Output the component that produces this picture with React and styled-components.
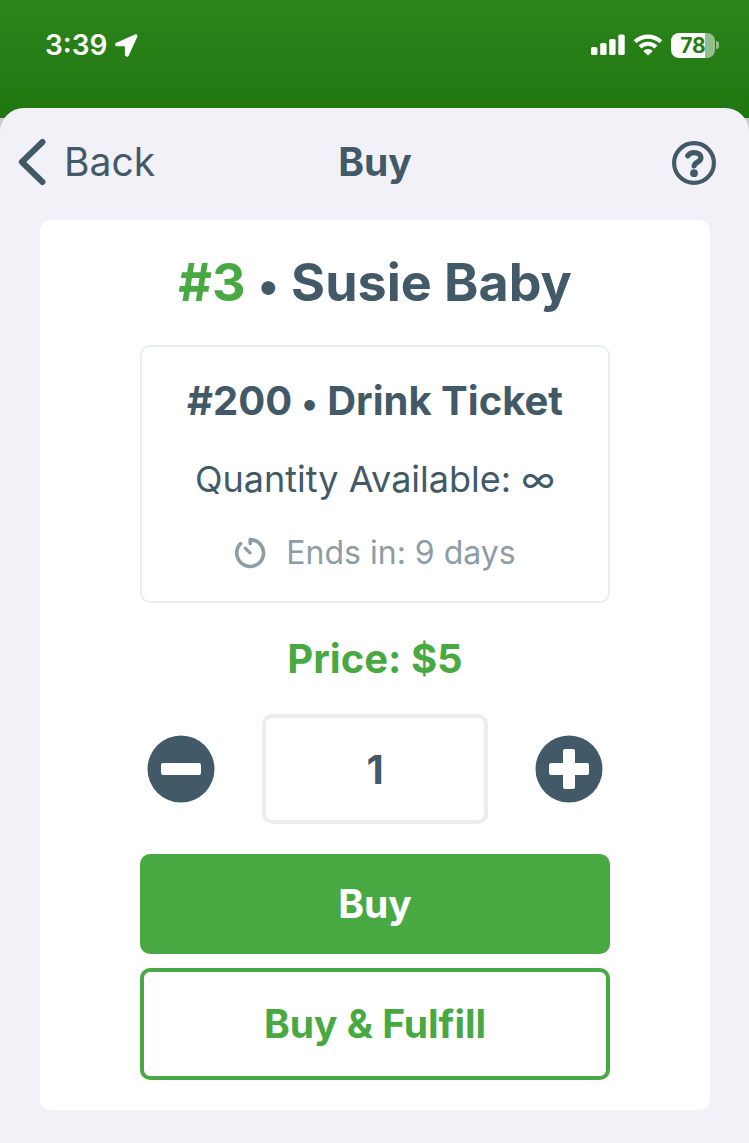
import React, { useState } from 'react';
import styled, { createGlobalStyle } from 'styled-components';

const App = () => {
  const [quantity, setQuantity] = useState('1');

  const step = (amount) => {
    setQuantity(String(Math.max(1, (parseInt(quantity, 10) || 0) + amount)));
  };

  return (
    <>
      <GlobalStyle />
      <Page>
        <StatusBar>
          <StatusGroup>
            <Time>3:39</Time>
            <LocationIcon />
          </StatusGroup>
          <StatusGroup>
            <SignalIcon />
            <WifiIcon />
            <Battery>
              <BatteryBody>78</BatteryBody>
              <BatteryTip />
            </Battery>
          </StatusGroup>
        </StatusBar>

        <Sheet>
          <NavBar>
            <BackButton type="button">
              <BackIcon />
              Back
            </BackButton>
            <NavTitle>Buy</NavTitle>
            <HelpButton type="button" aria-label="Help">
              <HelpIcon />
            </HelpButton>
          </NavBar>

          <Card>
            <Bidder>
              <Accent>#3</Accent> <Bullet>•</Bullet> Susie Baby
            </Bidder>
            <ItemBox>
              <ItemName>
                #200 <Bullet>•</Bullet> Drink Ticket
              </ItemName>
              <Available>Quantity Available: ∞</Available>
              <EndsIn>
                <TimerIcon />
                Ends in: 9 days
              </EndsIn>
            </ItemBox>
            <Price>Price: $5</Price>
            <Stepper>
              <RoundButton type="button" aria-label="Decrease quantity" onClick={() => step(-1)}>
                <MinusIcon />
              </RoundButton>
              <QuantityInput
                type="text"
                inputMode="numeric"
                aria-label="Quantity"
                value={quantity}
                onChange={(e) => setQuantity(e.target.value)}
              />
              <RoundButton type="button" aria-label="Increase quantity" onClick={() => step(1)}>
                <PlusIcon />
              </RoundButton>
            </Stepper>
            <Actions>
              <BuyButton type="button">Buy</BuyButton>
              <FulfillButton type="button">Buy &amp; Fulfill</FulfillButton>
            </Actions>
          </Card>
        </Sheet>
      </Page>
    </>
  );
};

const LocationIcon = () => (
  <svg width="23" height="23" viewBox="0 0 23 23" fill="#fff" aria-hidden="true">
    <path d="M20 0.4 L1.2 8.7 C-0.5 9.6 -0.1 12.2 1.7 12.3 H9 C9.6 12.3 9.9 12.6 9.9 13.2 V20.6 C10 23 13 23.3 13.8 21.4 L22.2 3 C23 1.1 21.7 -0.3 20 0.4 Z" />
  </svg>
);

const SignalIcon = () => (
  <svg width="34" height="22" viewBox="0 0 34 22" fill="#fff" aria-hidden="true">
    <rect x="0" y="13" width="6.4" height="8" rx="1.6" />
    <rect x="9.2" y="9" width="6.4" height="12" rx="1.6" />
    <rect x="18.2" y="5" width="6.4" height="16" rx="1.6" />
    <rect x="27.3" y="0.4" width="6.4" height="20.6" rx="1.6" />
  </svg>
);

const WifiIcon = () => (
  <svg width="30" height="22" viewBox="0 0 30 22" aria-hidden="true">
    <g fill="none" stroke="#fff" strokeWidth="4.2">
      <path d="M2.1 7.8 A18.6 18.6 0 0 1 27.9 7.8" />
      <path d="M7 13 A11.5 11.5 0 0 1 23 13" />
    </g>
    <path d="M15 21.6 L10.2 16.9 A6.8 6.8 0 0 1 19.8 16.9 Z" fill="#fff" />
  </svg>
);

const BackIcon = () => (
  <svg width="28" height="48" viewBox="0 0 28 48" aria-hidden="true">
    <path d="M24.5 4 L3.9 24 L24.5 44" fill="none" stroke="#425a68" strokeWidth="6" strokeLinecap="round" strokeLinejoin="round" />
  </svg>
);

const HelpIcon = () => (
  <svg width="44" height="44" viewBox="0 0 44 44" aria-hidden="true">
    <circle cx="22" cy="22" r="19.9" fill="none" stroke="#425a68" strokeWidth="4.2" />
    <path d="M15.8 14.8 C17.4 12.4 19.6 11.6 22 11.6 C25.8 11.6 28.9 13.4 28.9 17 C28.9 21.4 22.4 20.8 22.2 25" fill="none" stroke="#425a68" strokeWidth="5.2" strokeLinecap="round" />
    <circle cx="22" cy="32.2" r="3.9" fill="#425a68" />
  </svg>
);

const TimerIcon = () => (
  <svg width="32" height="32" viewBox="0 0 32 32" aria-hidden="true">
    <g fill="none" stroke="#8d9ca5" strokeWidth="3.6" strokeLinecap="round" strokeLinejoin="round">
      <path d="M16.2 6.6 V2.6 A13.4 13.4 0 1 1 6.6 6.6" />
      <path d="M11.2 11.2 L16 15.8" strokeWidth="3.2" />
    </g>
  </svg>
);

const MinusIcon = () => (
  <svg width="68" height="68" viewBox="0 0 68 68" aria-hidden="true">
    <circle cx="34" cy="34" r="33.5" fill="#425a68" />
    <rect x="14" y="28" width="40" height="12" rx="2" fill="#fff" />
  </svg>
);

const PlusIcon = () => (
  <svg width="68" height="68" viewBox="0 0 68 68" aria-hidden="true">
    <circle cx="34" cy="34" r="33.5" fill="#425a68" />
    <rect x="14" y="28" width="40" height="12" rx="2" fill="#fff" />
    <rect x="28" y="14" width="12" height="40" rx="2" fill="#fff" />
  </svg>
);

const GlobalStyle = createGlobalStyle`
  * {
    box-sizing: border-box;
  }

  body {
    margin: 0;
    background: #c9cbc8;
    color: #425a68;
    font-family: Inter, 'Liberation Sans', sans-serif;
  }

  button,
  input {
    font-family: inherit;
    color: inherit;
  }

  button {
    cursor: pointer;
  }

  svg {
    display: block;
    flex-shrink: 0;
  }
`;

const Page = styled.div`
  display: flex;
  flex-direction: column;
  min-height: 100vh;
`;

const StatusBar = styled.header`
  display: flex;
  justify-content: space-between;
  height: 118px;
  padding: 28px 30px 0 45px;
  background: linear-gradient(#2b861b, #20760f);
`;

const StatusGroup = styled.div`
  display: flex;
  align-items: center;
  gap: 8px;
  height: 34px;
`;

const Time = styled.span`
  color: #fff;
  font-size: 28px;
  font-weight: 600;
  line-height: 34px;
`;

const Battery = styled.div`
  display: flex;
  align-items: center;
  gap: 1px;
`;

const BatteryBody = styled.span`
  width: 44px;
  height: 25px;
  border-radius: 8px;
  background: linear-gradient(90deg, #fff 78%, #92c08a 78%);
  color: #257d15;
  font-size: 21px;
  font-weight: 700;
  line-height: 25px;
  text-align: center;
`;

const BatteryTip = styled.span`
  width: 3px;
  height: 8px;
  border-radius: 0 4px 4px 0;
  background: #92c08a;
`;

const Sheet = styled.main`
  flex: 1;
  margin-top: -10px;
  padding: 0 39px 33px 40px;
  border-radius: 24px 24px 0 0;
  background: #f2f1f8;
`;

const NavBar = styled.nav`
  display: grid;
  grid-template-columns: 1fr auto 1fr;
  align-items: center;
  height: 112px;
  margin: 0 -22px;
  padding-bottom: 4px;
`;

const BackButton = styled.button`
  display: flex;
  justify-self: start;
  align-items: center;
  gap: 18px;
  padding: 0;
  border: none;
  background: none;
  font-size: 39px;
  line-height: 48px;
`;

const NavTitle = styled.h1`
  margin: 0;
  font-size: 39px;
  font-weight: 700;
  line-height: 48px;
`;

const HelpButton = styled.button`
  justify-self: end;
  padding: 2px 16px 0 0;
  border: none;
  background: none;
`;

const Card = styled.section`
  display: flex;
  flex-direction: column;
  gap: 30px;
  padding: 30px 100px;
  border-radius: 10px;
  background: #fff;
`;

const Bidder = styled.h2`
  margin: 0 -60px;
  font-size: 52px;
  font-weight: 700;
  line-height: 65px;
  text-align: center;
`;

const Accent = styled.span`
  color: #48a942;
`;

const Bullet = styled.span`
  font-size: 0.85em;
  line-height: 1;
`;

const ItemBox = styled.div`
  display: flex;
  flex-direction: column;
  gap: 30px;
  padding: 30px 0 28px;
  border: 2px solid #eaeeef;
  border-radius: 10px;
  text-align: center;
`;

const ItemName = styled.h3`
  margin: 0;
  font-size: 40px;
  font-weight: 700;
  line-height: 48px;
`;

const Available = styled.p`
  margin: 0;
  font-size: 36px;
  line-height: 48px;
`;

const EndsIn = styled.p`
  display: flex;
  align-items: center;
  justify-content: center;
  gap: 20px;
  margin: 0;
  color: #8d9ca5;
  font-size: 32px;
  line-height: 40px;
`;

const Price = styled.p`
  margin: 0;
  color: #48a942;
  font-size: 40px;
  font-weight: 700;
  line-height: 51px;
  text-align: center;
`;

const Stepper = styled.div`
  display: flex;
  align-items: center;
  justify-content: space-between;
  gap: 47px;
  padding: 0 7px;
`;

const RoundButton = styled.button`
  padding: 0;
  border: none;
  border-radius: 50%;
  background: none;
`;

const QuantityInput = styled.input`
  flex: 1;
  min-width: 0;
  height: 110px;
  padding: 0;
  border: 4px solid #eaeeef;
  border-radius: 10px;
  outline: none;
  background: #fff;
  font-size: 40px;
  font-weight: 700;
  text-align: center;
`;

const Actions = styled.div`
  display: flex;
  flex-direction: column;
  gap: 14px;
`;

const ActionButton = styled.button`
  border-radius: 10px;
  font-size: 39px;
  font-weight: 700;
  line-height: 48px;
`;

const BuyButton = styled(ActionButton)`
  padding: 26px;
  border: none;
  background: #48a942;
  color: #fff;
`;

const FulfillButton = styled(ActionButton)`
  padding: 28px;
  border: 4px solid #48a942;
  background: #fff;
  color: #48a942;
`;

export default App;
